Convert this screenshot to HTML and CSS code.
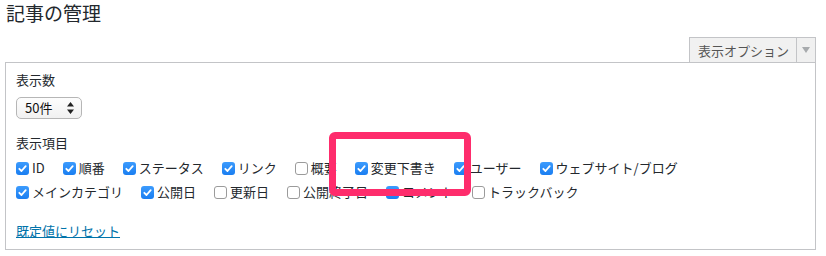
FILE: index.html
```html
<!DOCTYPE html>
<html lang="ja">
<head>
<meta charset="utf-8">
<title>記事の管理</title>
<link rel="stylesheet" href="styles.css">
</head>
<body>
<h1 class="title">記事の管理</h1>
<div class="opts-bar">
  <div class="opts-btn">
    <span class="opts-label">表示オプション</span>
    <span class="opts-toggle"><svg width="8" height="6" viewBox="0 0 8 6"><path d="M0 0H8L4 6Z" fill="#a7aaad"/></svg></span>
  </div>
</div>
<div class="panel">
  <div class="heading">表示数</div>
  <div class="select">
    <span class="select-text">50件</span>
    <svg class="select-arrows" width="7" height="12" viewBox="0 0 7 12"><path d="M3.5 0L7 4.5H0Z M3.5 12L0 7.5H7Z" fill="#222"/></svg>
  </div>
  <div class="heading heading-items">表示項目</div>
  <div class="row">
    <label class="item"><span class="cb on"><svg viewBox="0 0 13 13"><path d="M3.3 6.8L5.5 9L9.7 4.1" fill="none" stroke="#fff" stroke-width="1.8" stroke-linecap="round" stroke-linejoin="round"/></svg></span>ID</label>
    <label class="item"><span class="cb on"><svg viewBox="0 0 13 13"><path d="M3.3 6.8L5.5 9L9.7 4.1" fill="none" stroke="#fff" stroke-width="1.8" stroke-linecap="round" stroke-linejoin="round"/></svg></span>順番</label>
    <label class="item"><span class="cb on"><svg viewBox="0 0 13 13"><path d="M3.3 6.8L5.5 9L9.7 4.1" fill="none" stroke="#fff" stroke-width="1.8" stroke-linecap="round" stroke-linejoin="round"/></svg></span>ステータス</label>
    <label class="item"><span class="cb on"><svg viewBox="0 0 13 13"><path d="M3.3 6.8L5.5 9L9.7 4.1" fill="none" stroke="#fff" stroke-width="1.8" stroke-linecap="round" stroke-linejoin="round"/></svg></span>リンク</label>
    <label class="item"><span class="cb"></span>概要</label>
    <label class="item"><span class="cb on"><svg viewBox="0 0 13 13"><path d="M3.3 6.8L5.5 9L9.7 4.1" fill="none" stroke="#fff" stroke-width="1.8" stroke-linecap="round" stroke-linejoin="round"/></svg></span>変更下書き</label>
    <label class="item"><span class="cb on"><svg viewBox="0 0 13 13"><path d="M3.3 6.8L5.5 9L9.7 4.1" fill="none" stroke="#fff" stroke-width="1.8" stroke-linecap="round" stroke-linejoin="round"/></svg></span>ユーザー</label>
    <label class="item"><span class="cb on"><svg viewBox="0 0 13 13"><path d="M3.3 6.8L5.5 9L9.7 4.1" fill="none" stroke="#fff" stroke-width="1.8" stroke-linecap="round" stroke-linejoin="round"/></svg></span>ウェブサイト/ブログ</label>
  </div>
  <div class="row">
    <label class="item"><span class="cb on"><svg viewBox="0 0 13 13"><path d="M3.3 6.8L5.5 9L9.7 4.1" fill="none" stroke="#fff" stroke-width="1.8" stroke-linecap="round" stroke-linejoin="round"/></svg></span>メインカテゴリ</label>
    <label class="item"><span class="cb on"><svg viewBox="0 0 13 13"><path d="M3.3 6.8L5.5 9L9.7 4.1" fill="none" stroke="#fff" stroke-width="1.8" stroke-linecap="round" stroke-linejoin="round"/></svg></span>公開日</label>
    <label class="item"><span class="cb"></span>更新日</label>
    <label class="item"><span class="cb"></span>公開終了日</label>
    <label class="item"><span class="cb on"><svg viewBox="0 0 13 13"><path d="M3.3 6.8L5.5 9L9.7 4.1" fill="none" stroke="#fff" stroke-width="1.8" stroke-linecap="round" stroke-linejoin="round"/></svg></span>コメント</label>
    <label class="item"><span class="cb"></span>トラックバック</label>
  </div>
  <a class="reset" href="#">既定値にリセット</a>
</div>
<div class="highlight"></div>
</body>
</html>
```

FILE: styles.css
```css
html, body {
  margin: 0;
  padding: 0;
  background: #fff;
}
body {
  position: relative;
  width: 826px;
  height: 256px;
  overflow: hidden;
  font-family: "Noto Sans CJK JP", "Noto Sans", sans-serif;
  font-size: 13px;
  color: #23282d;
}
.title {
  margin: 0;
  padding-left: 6px;
  font-size: 19px;
  line-height: 26px;
  font-weight: 400;
  color: #23282d;
}
.opts-bar {
  display: flex;
  justify-content: flex-end;
  margin-top: 11px;
  padding-right: 10px;
}
.opts-btn {
  display: flex;
  height: 24px;
  border: 1px solid #c3c4c7;
  border-bottom: none;
  background: #f1f1f1;
}
.opts-label {
  display: flex;
  align-items: center;
  padding: 0 7px 0 8px;
  color: #555;
  font-size: 13px;
}
.opts-toggle {
  display: flex;
  align-items: center;
  justify-content: center;
  width: 18px;
  border-left: 1px solid #c3c4c7;
  background: #f0f0f0;
}
.panel {
  margin: 0 10px 0 5px;
  height: 178px;
  border: 1px solid #c3c4c7;
  padding: 8px 10px 0 10px;
}
.heading {
  line-height: 18px;
}
.select {
  display: flex;
  align-items: center;
  justify-content: space-between;
  box-sizing: border-box;
  width: 66px;
  height: 22px;
  margin-top: 8px;
  padding: 0 7px 0 8px;
  border: 1px solid #b6b6b6;
  border-radius: 5px;
  background: linear-gradient(#fdfdfd, #f1f1f1);
  color: #111;
}
.select-text {
  line-height: 20px;
}
.heading-items {
  margin-top: 15px;
}
.row {
  display: flex;
  line-height: 24px;
}
.heading-items + .row {
  margin-top: 4px;
}
.item {
  display: flex;
  align-items: center;
  margin-right: 18px;
  color: #23282d;
}
.cb {
  display: inline-block;
  box-sizing: border-box;
  width: 13px;
  height: 13px;
  margin-right: 3px;
  border: 1px solid #9b9b9b;
  border-radius: 3px;
  background: #fff;
}
.cb.on {
  border: none;
  background: linear-gradient(#3c9bfd, #1a7ef1);
}
.cb svg {
  display: block;
  width: 13px;
  height: 13px;
}
.reset {
  display: inline-block;
  margin-top: 18px;
  line-height: 18px;
  color: #0073aa;
  text-decoration: underline;
}
.highlight {
  position: absolute;
  left: 329px;
  top: 132px;
  width: 128px;
  height: 50px;
  border: 7px solid #fe2c6c;
  border-radius: 6px;
}
```
